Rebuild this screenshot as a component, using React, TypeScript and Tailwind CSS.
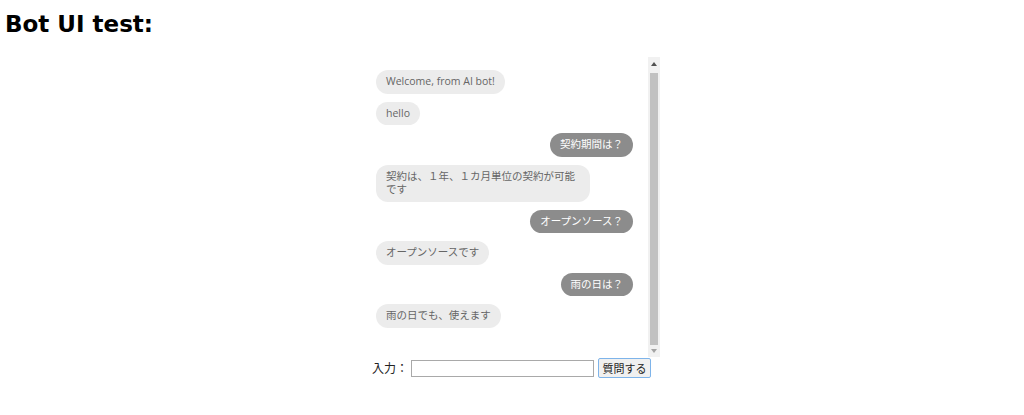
import React from "react";

type Msg = { from: "bot" | "user"; text: string };

const messages: Msg[] = [
  { from: "bot", text: "Welcome, from AI bot!" },
  { from: "bot", text: "hello" },
  { from: "user", text: "契約期間は？" },
  { from: "bot", text: "契約は、１年、１カ月単位の契約が可能です" },
  { from: "user", text: "オープンソース？" },
  { from: "bot", text: "オープンソースです" },
  { from: "user", text: "雨の日は？" },
  { from: "bot", text: "雨の日でも、使えます" },
];

const bubbleFont = {
  fontFamily: '"Open Sans", "Noto Sans CJK JP", sans-serif',
};

export default function App() {
  return (
    <div className="min-h-[415px] bg-white text-black" style={{ fontFamily: '"DejaVu Sans", "Noto Sans CJK JP", sans-serif' }}>
      <h1 className="m-0 pt-[9px] pl-[5px] text-[23px] leading-[30px] font-bold">Bot UI test:</h1>
      <div className="ml-[370px] mt-[18px] w-[290px]">
        <div className="flex h-[300px]">
          <div className="flex flex-1 flex-col gap-[8px] pt-[13px] pl-[6px] pr-[15px]" style={bubbleFont}>
            {messages.map((m, i) =>
              m.from === "bot" ? (
                <div key={i} className="flex justify-start">
                  <div className="max-w-[214px] rounded-[12px] bg-[#ececec] px-[10px] py-[5px] text-[10.5px] leading-[13.5px] text-[#666666]">
                    {m.text}
                  </div>
                </div>
              ) : (
                <div key={i} className="flex justify-end">
                  <div className="max-w-[214px] rounded-[12px] bg-[#8c8c8c] px-[10px] py-[5px] text-[10.5px] leading-[13.5px] text-white">
                    {m.text}
                  </div>
                </div>
              )
            )}
          </div>
          <div className="flex w-[12px] flex-col bg-[#f1f1f1]">
            <div className="flex h-[14px] items-center justify-center">
              <svg width="6" height="4" viewBox="0 0 6 4">
                <polygon points="3,0 6,4 0,4" fill="#505050" />
              </svg>
            </div>
            <div className="mx-[2px] mt-[2px] flex-1 bg-[#c1c1c1]" />
            <div className="flex h-[12px] items-center justify-center">
              <svg width="6" height="4" viewBox="0 0 6 4">
                <polygon points="0,0 6,0 3,4" fill="#a3a3a3" />
              </svg>
            </div>
          </div>
        </div>
        <div className="flex items-center pl-[2px] pt-[1px]" style={{ fontFamily: '"Noto Sans CJK JP", sans-serif' }}>
          <span className="w-[39px] text-[12px] leading-[20px] text-[#222]">入力：</span>
          <input
            type="text"
            className="h-[17px] w-[183px] border border-[#a9a9a9] bg-white px-[2px] text-[11px] outline-none"
          />
          <button className="ml-[4px] h-[20px] w-[53px] rounded-[2px] border border-[#7eb4ea] bg-[#f0f0f0] text-[11px] leading-[16px] text-[#222]">
            質問する
          </button>
        </div>
      </div>
    </div>
  );
}
